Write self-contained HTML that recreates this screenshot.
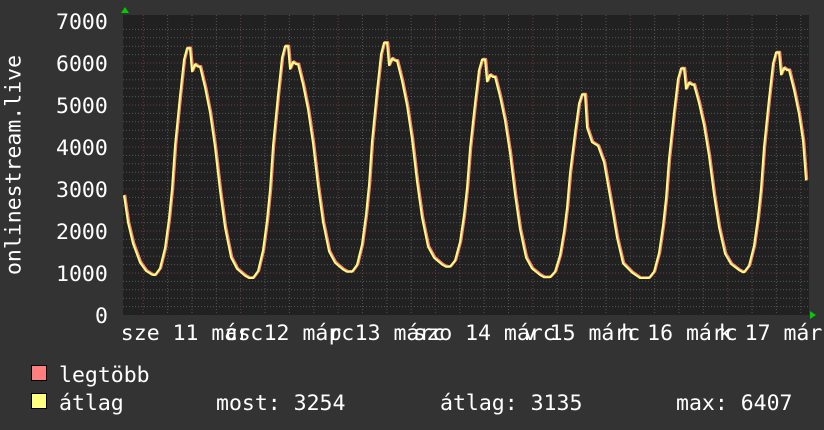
<!DOCTYPE html>
<html><head><meta charset="utf-8"><style>
html,body{margin:0;padding:0;background:#333;width:824px;height:430px;overflow:hidden}
.t{position:absolute;font-family:"DejaVu Sans Mono","Liberation Mono",monospace;font-size:21.5px;color:#fff;line-height:1;white-space:pre}
.c{transform:translateX(-50%)}
.sq{position:absolute;width:14px;height:14px;border:1px solid #000}
</style></head><body>
<svg width="824" height="430" style="position:absolute;left:0;top:0">
<rect x="123" y="15" width="686" height="300" fill="#212121"/>
<g id="grid"></g>
<polygon points="121,13 129,13 125,7" fill="#0c0"/>
<polygon points="810,311 810,319 816,315" fill="#0c0"/>
<polyline id="p" fill="none" stroke="#ff7f7f" stroke-width="2.5" stroke-linejoin="round"/>
<polyline id="y" fill="none" stroke="#ffff80" stroke-width="2" stroke-linejoin="round"/>
</svg>
<div class="t" style="left:56px;top:12px">7000</div>
<div class="t" style="left:56px;top:54px">6000</div>
<div class="t" style="left:56px;top:96px">5000</div>
<div class="t" style="left:56px;top:138px">4000</div>
<div class="t" style="left:56px;top:180px">3000</div>
<div class="t" style="left:56px;top:222px">2000</div>
<div class="t" style="left:56px;top:264px">1000</div>
<div class="t" style="left:95px;top:306px">0</div>
<div class="t" style="left:14px;top:165px;transform:translate(-50%,-50%) rotate(-90deg)">onlinestream.live</div>
<div class="t c" style="left:192px;top:323px">sze 11 márc</div>
<div class="t c" style="left:289.5px;top:323px">cs 12 márc</div>
<div class="t c" style="left:387px;top:323px">p 13 márc</div>
<div class="t c" style="left:484.5px;top:323px">szo 14 márc</div>
<div class="t c" style="left:582px;top:323px">v 15 márc</div>
<div class="t c" style="left:679.5px;top:323px">h 16 márc</div>
<div class="t c" style="left:777px;top:323px">k 17 márc</div>
<div class="sq" style="left:31px;top:365px;background:#ff7f7f"></div>
<div class="sq" style="left:31px;top:393px;background:#ffff80"></div>
<div class="t" style="left:59px;top:365px">legtöbb</div>
<div class="t" style="left:59px;top:393px">átlag</div>
<div class="t" style="left:216px;top:393px">most: 3254</div>
<div class="t" style="left:440px;top:393px">átlag: 3135</div>
<div class="t" style="left:676px;top:393px">max: 6407</div>
<script>
var g=document.getElementById('grid'),s='';
for(var i=1;i<35;i++){var y=315-i*8.4;var maj=i%5==0;s+='<line x1="123" x2="809" y1="'+y+'" y2="'+y+'" stroke="'+(maj?'#6a3a3a':'#555')+'" stroke-width="1" stroke-dasharray="1,2"/>';}
for(var x=143.3-24.35*5;x<809;x+=24.35){if(x<124)continue;var k=Math.round((x-143.3)/24.35);var maj=((k%4)+4)%4==0;s+='<line y1="15" y2="315" x1="'+x+'" x2="'+x+'" stroke="'+(maj?'#6a3a3a':'#555')+'" stroke-width="1" stroke-dasharray="1,2"/>';}
g.innerHTML=s;
var P=[187,285,384,482,582,681,776],V=[6350,6400,6480,6080,5250,5870,6250],M=[950,880,1030,1150,900,880,1020,1000];
var rise=[[-32,0],[-27,.03],[-22,.12],[-18,.25],[-15,.38],[-12,.57],[-7,.79],[-3,.95],[0,1],[3,1]];
var fall=[[5,.9],[8,.93],[11,.92],[13,.92],[18,.83],[23,.72],[28,.57],[33,.38],[38,.22],[44,.09],[50,.04],[58,.01],[62,0]];
var fall5=[[5,.82],[10,.74],[16,.72],[22,.63],[31,.35],[35,.22],[41,.08],[50,.03],[58,0]];
var pts=[[124,2850],[128,2200],[133,1700],[140,1250],[146,1050],[152,960]];
for(var c=0;c<7;c++){var p=P[c],v=V[c],m=M[c],n=M[c+1];
rise.forEach(function(r){pts.push([p+r[0],m+(v-m)*r[1]]);});
if(c==6){[[5,.9],[8,.93],[11,.92],[13,.92],[18,.83],[23,.72],[27,.6],[30,.42]].forEach(function(r){pts.push([p+r[0],n+(v-n)*r[1]]);});break;}
(c==4?fall5:fall).forEach(function(r){pts.push([p+r[0],n+(v-n)*r[1]]);});}
var a=pts.map(function(q){return q[0]+','+(315-q[1]*0.042).toFixed(1)}).join(' ');
var b=pts.map(function(q){return (q[0]+1)+','+(315-q[1]*0.042-0.5).toFixed(1)}).join(' ');
document.getElementById('p').setAttribute('points',b);
document.getElementById('y').setAttribute('points',a);
</script>
</body></html>
